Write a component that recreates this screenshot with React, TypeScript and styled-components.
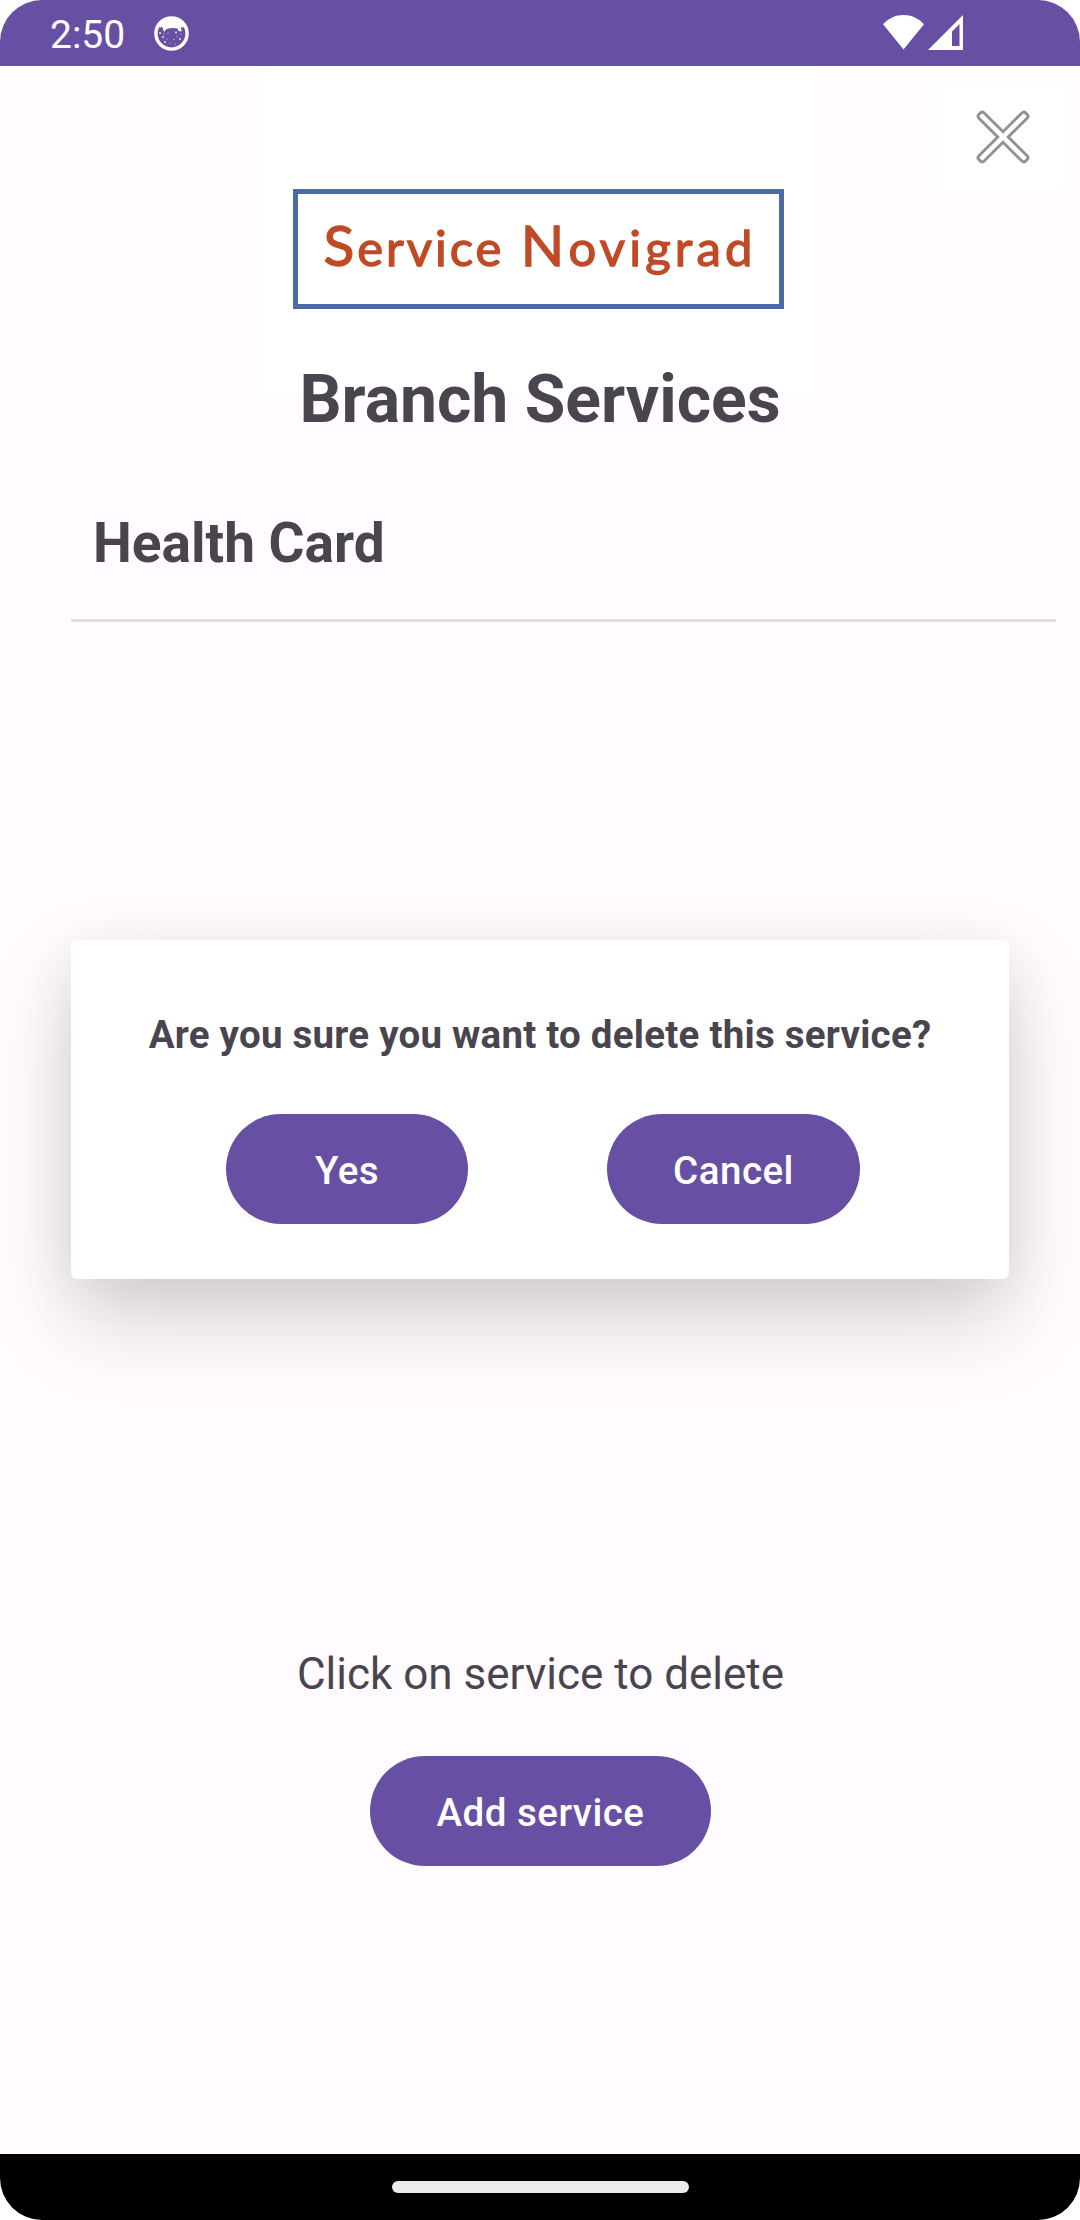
import React from "react";
import styled, { createGlobalStyle } from "styled-components";

const purple = "#6750a4";
const ink = "#49454f";
const surface = "#fffbfe";

const GlobalStyle = createGlobalStyle`
  body {
    margin: 0;
    background: #ffffff;
    font-family: Roboto, "Noto Sans", sans-serif;
    color: ${ink};
  }
`;

const Screen = styled.div`
  position: relative;
  display: flex;
  flex-direction: column;
  width: 1080px;
  height: 2220px;
  overflow: hidden;
  border-radius: 42px;
  background: ${surface};
`;

const StatusBar = styled.header`
  flex: none;
  display: flex;
  align-items: flex-start;
  justify-content: space-between;
  box-sizing: border-box;
  height: 66px;
  padding: 0 117px 0 50px;
  background: ${purple};
  color: #ffffff;
`;

const StatusGroup = styled.div<{ $gap: number; $top: number }>`
  display: flex;
  gap: ${(p) => p.$gap}px;
  padding-top: ${(p) => p.$top}px;
`;

const Clock = styled.span`
  width: 75px;
  font-size: 39px;
  line-height: 45px;
  margin-top: -3px;
`;

const Header = styled.div`
  flex: none;
  display: grid;
  grid-template-columns: 259px 558px 1fr;
  height: 327px;
`;

const LogoPanel = styled.div`
  grid-column: 2;
  display: flex;
  align-items: flex-start;
  justify-content: center;
  box-sizing: border-box;
  padding-top: 123px;
  background: #ffffff;
`;

const LogoFrame = styled.div`
  display: flex;
  justify-content: space-between;
  box-sizing: border-box;
  width: 491px;
  height: 120px;
  padding: 18px 26px 0 26px;
  border: 5.5px solid #4b6ba3;
  color: #c04a26;
`;

const LogoWord = styled.span<{ $spacing: number }>`
  font-family: Lato, sans-serif;
  font-size: 49px;
  line-height: 64px;
  letter-spacing: ${(p) => p.$spacing}px;
  margin-right: -${(p) => p.$spacing}px;
  -webkit-text-stroke: 1.3px #c04a26;

  &::first-letter {
    font-size: 57px;
    line-height: 64px;
  }
`;

const CloseButton = styled.button`
  justify-self: end;
  display: flex;
  align-items: center;
  justify-content: center;
  width: 132px;
  height: 110px;
  margin: 16px 11px 0 0;
  padding: 0;
  border: 0;
  border-radius: 6px;
  background: #ffffff;
`;

const Title = styled.h1`
  position: relative;
  margin: -32px 0 0;
  font-size: 66px;
  line-height: 78px;
  font-weight: 700;
  text-align: center;
`;

const ServiceList = styled.ul`
  flex: 1;
  margin: 0;
  padding: 72px 24px 0 71px;
  list-style: none;
`;

const ServiceItem = styled.li`
  padding: 0 22px 44px;
  border-bottom: 3px solid #e0dce0;
  font-size: 55px;
  line-height: 64px;
  font-weight: 700;
`;

const Actions = styled.div`
  flex: none;
  display: flex;
  flex-direction: column;
  align-items: center;
  gap: 56px;
  padding: 0 0 288px 1px;
`;

const Hint = styled.p`
  margin: 0;
  font-size: 44px;
  line-height: 52px;
`;

const PillButton = styled.button<{ $width: number }>`
  box-sizing: border-box;
  width: ${(p) => p.$width}px;
  height: 110px;
  padding: 3px 0 0;
  border: 0;
  border-radius: 55px;
  background: ${purple};
  color: #ffffff;
  font-family: inherit;
  font-size: 38.5px;
  line-height: 46px;
  font-weight: 500;
  letter-spacing: 0.5px;
`;

const Dialog = styled.div`
  position: absolute;
  top: 940px;
  left: 71px;
  display: flex;
  flex-direction: column;
  align-items: center;
  gap: 56px;
  box-sizing: border-box;
  width: 938px;
  height: 339px;
  padding-top: 72px;
  border-radius: 6px;
  background: #ffffff;
  box-shadow: 0 40px 88px rgba(0, 0, 0, 0.17), 0 8px 50px rgba(0, 0, 0, 0.06);
`;

const Question = styled.p`
  margin: 0;
  font-size: 38.5px;
  line-height: 46px;
  font-weight: 700;
  letter-spacing: 0.24px;
`;

const DialogButtons = styled.div`
  display: flex;
  gap: 139px;
  padding-left: 6px;
`;

const NavBar = styled.footer`
  flex: none;
  display: flex;
  justify-content: center;
  box-sizing: border-box;
  height: 66px;
  padding-top: 27px;
  background: #000000;
`;

const NavHandle = styled.div`
  width: 297px;
  height: 12px;
  border-radius: 6px;
  background: #ebebeb;
`;

const speckles = [
  [7, 17], [11, 18], [15, 17], [23, 16.5], [28, 18], [24, 20],
  [10, 21], [14, 23], [21, 23.5], [27, 23], [17, 27], [22, 28], [12, 26],
];

function FaceIcon() {
  return (
    <svg width="36" height="36" viewBox="0 0 36 36">
      <circle cx="18.5" cy="17.5" r="15.6" fill="none" stroke="#fff" strokeWidth="3.400" />
      <path d="M5 9Q10 2 18.500 2T32 9L29.500 12L28 10.500L28.500 15.500L25.500 15L24.500 12.500Q18.500 11.500 13.500 13L11 16L10 12.500L8.500 10.500L7 12Z" fill="#fff" />
      {speckles.map(([x, y], i) => (
        <circle key={i} cx={x} cy={y} r={i % 3 === 0 ? 1 : 0.6} fill="#fff" opacity="0.8" />
      ))}
    </svg>
  );
}

function WifiIcon() {
  return (
    <svg width="41" height="35" viewBox="0 0 41 35">
      <path d="M20.500 34.500L0 9.300C5.500 3.300 12.500 0 20.500 0S35.500 3.300 41 9.300Z" fill="#fff" />
    </svg>
  );
}

function SignalIcon() {
  return (
    <svg width="35" height="35" viewBox="0 0 35 35">
      <path fillRule="evenodd" d="M35 0V35H0ZM31.500 9L24 16.500V31H31.500Z" fill="#fff" />
    </svg>
  );
}

function CrossIcon() {
  return (
    <svg width="56" height="56" viewBox="-28 -28 56 56">
      <path
        transform="rotate(45)"
        d="M-3.700 -3.700V-30Q-3.700 -33 -1.500 -33H1.500Q3.700 -33 3.700 -30V-3.700H30Q33 -3.700 33 -1.500V1.500Q33 3.700 30 3.700H3.700V30Q3.700 33 1.500 33H-1.500Q-3.700 33 -3.700 30V3.700H-30Q-33 3.700 -33 1.500V-1.500Q-33 -3.700 -30 -3.700Z"
        fill="#fff"
        stroke="#929292"
        strokeWidth="2.900"
      />
    </svg>
  );
}

export default function App() {
  return (
    <>
      <GlobalStyle />
      <Screen>
        <StatusBar>
          <StatusGroup $gap={28} $top={16}>
            <Clock>2:50</Clock>
            <FaceIcon />
          </StatusGroup>
          <StatusGroup $gap={4} $top={15}>
            <WifiIcon />
            <SignalIcon />
          </StatusGroup>
        </StatusBar>
        <Header>
          <LogoPanel>
            <LogoFrame>
              <LogoWord $spacing={2.9}>Service</LogoWord>
              <LogoWord $spacing={4.2}>Novigrad</LogoWord>
            </LogoFrame>
          </LogoPanel>
          <CloseButton aria-label="Close">
            <CrossIcon />
          </CloseButton>
        </Header>
        <Title>Branch Services</Title>
        <ServiceList>
          <ServiceItem>Health Card</ServiceItem>
        </ServiceList>
        <Actions>
          <Hint>Click on service to delete</Hint>
          <PillButton $width={341}>Add service</PillButton>
        </Actions>
        <NavBar>
          <NavHandle />
        </NavBar>
        <Dialog role="dialog">
          <Question>Are you sure you want to delete this service?</Question>
          <DialogButtons>
            <PillButton $width={242}>Yes</PillButton>
            <PillButton $width={253}>Cancel</PillButton>
          </DialogButtons>
        </Dialog>
      </Screen>
    </>
  );
}
